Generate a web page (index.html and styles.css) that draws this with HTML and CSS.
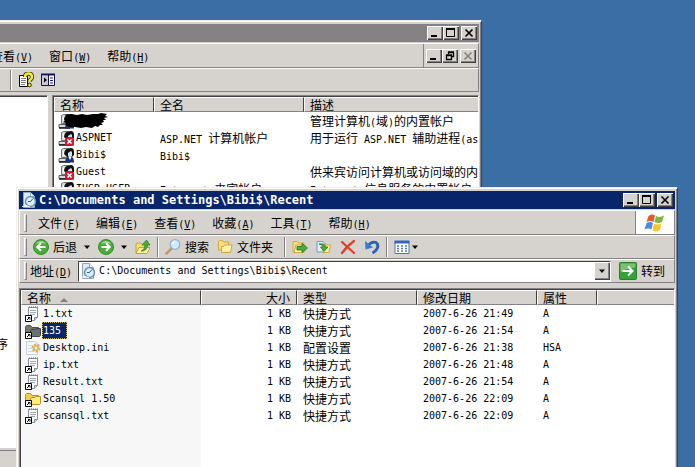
FILE: index.html
```
<!DOCTYPE html>
<html lang="zh-CN">
<head>
  <meta charset="UTF-8">
  <meta name="viewport" content="width=device-width, initial-scale=1.0">
  <title>Recent</title>
  <link rel="stylesheet" href="styles.css">
</head>
<body>
  <!-- shared icons -->
  <svg class="defs" width="0" height="0">
    <symbol id="i-min" viewBox="0 0 12 10"><path d="M2 8h6" stroke="currentColor" stroke-width="2"/></symbol>
    <symbol id="i-max" viewBox="0 0 12 10"><path d="M1.500 1v7.500h8V1M1 1h9" fill="none" stroke="currentColor"/><path d="M1 1h9" stroke="currentColor" stroke-width="2"/></symbol>
    <symbol id="i-restore" viewBox="0 0 12 10"><path d="M4.500 3V1.500h5v4H8M4 1h6M2.500 4.500h5v4h-5zM2 4h6" fill="none" stroke="currentColor" stroke-width="1.300"/></symbol>
    <symbol id="i-close" viewBox="0 0 12 10"><path d="M2.500 1.500l7 7M9.500 1.500l-7 7" stroke="currentColor" stroke-width="1.700"/></symbol>
    <symbol id="i-down" viewBox="0 0 8 8"><path d="M1 2.500h6L4 6z" fill="#000"/></symbol>
    <symbol id="i-recent" viewBox="0 0 16 16">
      <path d="M2.500.5h7l4 4v11h-11z" fill="#dcecf8" stroke="#89a9c4"/>
      <path d="M9.500.5v4h4" fill="#fff" stroke="#89a9c4"/>
      <circle cx="9.500" cy="9.500" r="5" fill="#d8f0fa" stroke="#7090b0" stroke-width="1.500"/>
      <path d="M9.500 9.500l2.500-3M9.500 9.500H7" stroke="#2c5c88"/>
      <path d="M1 14.500q4-2 8 .5" stroke="#fff" fill="none"/>
    </symbol>
    <symbol id="i-user" viewBox="0 0 16 16">
      <path d="M3.500 2.500l2-1h5v9h-7z" fill="#d8dcd8" stroke="#707470"/>
      <path d="M5 4h4v5H5z" fill="#f4faf8"/>
      <path d="M1 11.500h10v3H1z" fill="#dcdcdc" stroke="#606060"/>
      <path d="M1 15h11" stroke="#181818" stroke-width="1.500"/>
      <path d="M6 7q0-6 7-6 3 0 3 4v3l-2 2H9z" fill="#101010"/>
      <path d="M10 6l3-2 1 1v4l-2 2-2-2z" fill="#c8e4f8"/>
      <path d="M7 15.500q0-5 4-5.500h3q2 1 2 5.500z" fill="#1c3080"/>
      <path d="M10.500 10l1.500 3 1.500-3z" fill="#fff"/>
    </symbol>
    <symbol id="i-user-off" viewBox="0 0 16 16">
      <use href="#i-user"/>
      <rect x="7" y="7" width="9" height="9" rx="3" fill="#d81830"/>
      <path d="M9.500 9.500l4 4M13.500 9.500l-4 4" stroke="#fff" stroke-width="1.500"/>
    </symbol>
    <symbol id="i-link" viewBox="0 0 16 16">
      <path d="M.5 9.500h6v6h-6z" fill="#fff" stroke="#000"/>
      <path d="M2 14l3-3M3 11.500h2v2" fill="none" stroke="#000"/>
    </symbol>
    <symbol id="i-txt" viewBox="0 0 16 16">
      <path d="M3.500 1.500h9v10l-3 3h-6z" fill="#fafafa" stroke="#8a9098"/>
      <path d="M12.500 11.500h-3v3" fill="#d0d8e0" stroke="#8a9098"/>
      <path d="M5 4.500h6M5 6.500h6M5 8.500h5" stroke="#a0a8b0"/>
      <path d="M4 1h9" stroke="#606870" stroke-dasharray="1 1"/>
      <use href="#i-link"/>
    </symbol>
    <symbol id="i-folder" viewBox="0 0 16 16">
      <path d="M.5 13V3.500l1-1h4l1.500 2h6.500V13z" fill="#f0d050" stroke="#b89020"/>
      <path d="M5.500 13.500v-6l1.500-1h3l1-1h4.500v7l-1 1z" fill="#ffec80" stroke="#b89020"/>
    </symbol>
    <symbol id="i-folder-link" viewBox="0 0 16 16"><use href="#i-folder"/><use href="#i-link"/></symbol>
    <symbol id="i-folder-sel" viewBox="0 0 16 16">
      <path d="M.5 13V3.500l1-1h4l1.500 2h6.500V13z" fill="#74786c" stroke="#50544c"/>
      <path d="M5.500 13.500v-6l1.500-1h3l1-1h4.500v7l-1 1z" fill="#687070" stroke="#3c4454"/>
      <use href="#i-link"/>
    </symbol>
    <symbol id="i-ini" viewBox="0 0 16 16">
      <path d="M1.500 1.500h9l2 2v11h-11z" fill="#f6f8fa" stroke="#c4d0dc"/>
      <path d="M3 5.500h5M3 8.500h4M3 11.500h5" stroke="#d0dce8"/>
      <circle cx="11" cy="8" r="3" fill="#e8c880" stroke="#d8b068" stroke-width="3" stroke-dasharray="2 1"/>
      <circle cx="11" cy="8" r="1" fill="#fff"/>
    </symbol>
  </svg>

  <main class="desktop">
    <section class="window back-window" aria-label="计算机管理">
      <div class="title-bar inactive">
        <div class="win-buttons">
          <button class="win-btn" aria-label="最小化"><svg><use href="#i-min"/></svg></button>
          <button class="win-btn" aria-label="最大化"><svg><use href="#i-max"/></svg></button>
          <button class="win-btn close" aria-label="关闭"><svg><use href="#i-close"/></svg></button>
        </div>
      </div>
      <div class="band menu-band">
        <nav class="menu">
          <button>查看<span class="en">(<u>V</u>)</span></button>
          <button>窗口<span class="en">(<u>W</u>)</span></button>
          <button>帮助<span class="en">(<u>H</u>)</span></button>
        </nav>
        <div class="win-buttons mdi">
          <button class="win-btn" aria-label="最小化"><svg><use href="#i-min"/></svg></button>
          <button class="win-btn" aria-label="还原"><svg><use href="#i-restore"/></svg></button>
          <button class="win-btn close" aria-label="关闭" disabled><svg><use href="#i-close"/></svg></button>
        </div>
      </div>
      <div class="band back-tools">
        <span class="tool-sep"></span>
        <button class="tool" aria-label="帮助">
          <svg class="icon" viewBox="0 0 16 16">
            <path d="M1.500 3.500h8v11h-8z" fill="#fff" stroke="#000"/>
            <path d="M3 6.500h5M3 8.500h5M3 10.500h5M3 12.500h4" stroke="#808080"/>
            <path d="M7 5q0-3.500 3.500-3.500T14 5q0 2-2.500 3.500V10" fill="none" stroke="#303000" stroke-width="4"/>
            <path d="M7 5q0-3.500 3.500-3.500T14 5q0 2-2.500 3.500V10" fill="none" stroke="#f4ec30" stroke-width="2.500"/>
            <circle cx="11.500" cy="13" r="1.800" fill="#f4ec30" stroke="#303000"/>
          </svg>
        </button>
        <button class="tool" aria-label="显示/隐藏操作窗格">
          <svg class="icon" viewBox="0 0 16 16">
            <path d="M1.500 2.500h13v11h-13z" fill="#fff" stroke="#101060"/>
            <path d="M1 2.500h14" stroke="#101060" stroke-width="2"/>
            <path d="M2 4h6v9H2z" fill="#c8c8d8"/>
            <path d="M8.500 3v10" stroke="#101060"/>
            <path d="M4 5.500v5L7 8z" fill="#000"/>
            <path d="M10 6h3M10 8.500h3M10 11h3" stroke="#202080"/>
          </svg>
        </button>
      </div>
      <div class="panes">
        <div class="pane tree"><span>序</span></div>
        <div class="pane list">
          <table class="users">
            <colgroup><col class="c-user"><col class="c-full"><col></colgroup>
            <thead><tr><th>名称</th><th>全名</th><th>描述</th></tr></thead>
            <tbody>
              <tr>
                <td class="name">
                  <svg class="scribble" viewBox="0 0 52 16">
                    <use href="#i-user" width="16" height="16"/>
                    <path d="M7 2l6-1 6 1 5-1 5 1 6-1 5 0 3-1 6 1-2 2 3 1-4 1 2 2-3 0 1 2-3 1 2 2-3 0-2 2-3-1-3 2-6-1-5 1-6-1-5 0-5-2 1-2-3-1 3-2-2-2 3-1z"/>
                  </svg>
                </td>
                <td></td>
                <td>管理计算机<span class="en">(</span>域<span class="en">)</span>的内置帐户</td>
              </tr>
              <tr>
                <td class="name"><svg class="icon"><use href="#i-user-off"/></svg><span class="en">ASPNET</span></td>
                <td><span class="en">ASP.NET </span>计算机帐户</td>
                <td>用于运行<span class="en"> ASP.NET </span>辅助进程<span class="en">(aspnet_wp.exe)</span></td>
              </tr>
              <tr>
                <td class="name"><svg class="icon"><use href="#i-user"/></svg><span class="en">Bibi$</span></td>
                <td><span class="en">Bibi$</span></td>
                <td></td>
              </tr>
              <tr>
                <td class="name"><svg class="icon"><use href="#i-user-off"/></svg><span class="en">Guest</span></td>
                <td></td>
                <td>供来宾访问计算机或访问域的内置帐户</td>
              </tr>
              <tr>
                <td class="name"><svg class="icon"><use href="#i-user"/></svg><span class="en">IUSR_USER</span></td>
                <td><span class="en">Internet </span>来宾帐户</td>
                <td><span class="en">Internet </span>信息服务的内置帐户</td>
              </tr>
            </tbody>
          </table>
        </div>
      </div>
      <div class="status"></div>
    </section>

    <section class="window front-window" aria-label="Recent">
      <div class="title-bar">
        <svg class="icon"><use href="#i-recent"/></svg>
        <h1>C:\Documents and Settings\Bibi$\Recent</h1>
        <div class="win-buttons">
          <button class="win-btn" aria-label="最小化"><svg><use href="#i-min"/></svg></button>
          <button class="win-btn" aria-label="最大化"><svg><use href="#i-max"/></svg></button>
          <button class="win-btn close" aria-label="关闭"><svg><use href="#i-close"/></svg></button>
        </div>
      </div>

      <div class="band menu-band">
        <span class="grip"></span>
        <nav class="menu">
          <button>文件<span class="en">(<u>F</u>)</span></button>
          <button>编辑<span class="en">(<u>E</u>)</span></button>
          <button>查看<span class="en">(<u>V</u>)</span></button>
          <button>收藏<span class="en">(<u>A</u>)</span></button>
          <button>工具<span class="en">(<u>T</u>)</span></button>
          <button>帮助<span class="en">(<u>H</u>)</span></button>
        </nav>
        <div class="brand">
          <svg viewBox="0 0 22 20" width="22" height="20">
            <path d="M4.500 3Q8 .5 11 2.500L9.500 9Q6 7 2.500 9z" fill="#e8582c"/>
            <path d="M12 3q3.500 2 8-.5L18 9q-4 2-7.500 0z" fill="#7cb83c"/>
            <path d="M2.500 10q3.500-2 6.500 0l-1.500 6.500q-3-2-7 0z" fill="#4c8ce0"/>
            <path d="M10 10.500q3.500 2 7.500 0L16 17q-4 2.500-7.500.5z" fill="#f8c430"/>
          </svg>
        </div>
      </div>

      <div class="band tools">
        <span class="grip"></span>
        <button class="tool">
          <svg class="icon" viewBox="0 0 16 16"><circle cx="8" cy="8" r="7.500" fill="#48ac38" stroke="#3c8c30"/><path d="M2.500 5Q8-1 13.500 5 8 3 2.500 5z" fill="#a8e098"/><path d="M12.500 8H4.500M8 4.200L4.200 8 8 11.800" fill="none" stroke="#fff" stroke-width="2"/></svg>
          后退
        </button>
        <button class="drop" aria-label="后退历史"><svg><use href="#i-down"/></svg></button>
        <button class="tool" aria-label="前进">
          <svg class="icon" viewBox="0 0 16 16"><circle cx="8" cy="8" r="7.500" fill="#48ac38" stroke="#3c8c30"/><path d="M2.500 5Q8-1 13.500 5 8 3 2.500 5z" fill="#a8e098"/><path d="M3.500 8h8M8 4.200L11.800 8 8 11.800" fill="none" stroke="#fff" stroke-width="2"/></svg>
        </button>
        <button class="drop" aria-label="前进历史"><svg><use href="#i-down"/></svg></button>
        <button class="tool" aria-label="向上">
          <svg class="icon" viewBox="0 0 16 16"><path d="M1 14.500V5l1-1h4l1 1.500h5l-1 9z" fill="#f4dc68" stroke="#c8a438"/><path d="M1 14.500l3-6h11l-3 6z" fill="#fff0a0" stroke="#c8a438"/><path d="M6 12q4-1 4-6H7l4.500-5L15 6h-2.500q0 6-6.500 6z" fill="#48b038" stroke="#287820" stroke-width=".7"/></svg>
        </button>
        <span class="tool-sep"></span>
        <button class="tool">
          <svg class="icon" viewBox="0 0 16 16"><path d="M1.500 14.500l5-5" stroke="#c09870" stroke-width="2.500" stroke-linecap="round"/><circle cx="10" cy="5.500" r="4.800" fill="#d0ecfc" stroke="#90b0d0" stroke-width="1.300"/><path d="M7.500 5Q8 3 10 2.500" fill="none" stroke="#fff" stroke-width="1.500"/></svg>
          搜索
        </button>
        <button class="tool folders">
          <svg class="icon" viewBox="0 0 16 16"><path d="M1.500 11V2.500l1-1h3l1 1.500h5V11z" fill="#f8e078" stroke="#d0a840"/><path d="M4.500 13.500v-6h2l1-1.500h7.500l-1.500 7.500z" fill="#fff2a8" stroke="#d0a840"/></svg>
          文件夹
        </button>
        <span class="tool-sep"></span>
        <button class="tool" aria-label="移至">
          <svg class="icon" viewBox="0 0 16 16"><path d="M1 13V2.500h4L6.500 4H12v9z" fill="#f8e078" stroke="#d0a840"/><path d="M2 13.500L4 6h9l-1 7.500z" fill="#fff4b8" stroke="#d0a840"/><path d="M5 7.500h5V4.500L15.500 9 10 13.500V11H5z" fill="#48b038" stroke="#207020" stroke-width=".8"/></svg>
        </button>
        <button class="tool" aria-label="复制到">
          <svg class="icon" viewBox="0 0 16 16"><path d="M1 2.500h6l2 2V13H1z" fill="#e0f0fc" stroke="#7898c0"/><path d="M7 13.500V6h7.500L13 13.500z" fill="#fff0a0" stroke="#d0a840"/><path d="M3 5q6-1 6.500 3H12l-4 4.500L4.500 8H7Q7 5.500 3 5z" fill="#48b038" stroke="#207020" stroke-width=".7"/></svg>
        </button>
        <button class="tool" aria-label="删除">
          <svg class="icon" viewBox="0 0 16 16"><path d="M2 3l12 11M14 2Q7 7 2 14" fill="none" stroke="#e04028" stroke-width="2.300" stroke-linecap="round"/></svg>
        </button>
        <button class="tool" aria-label="撤消">
          <svg class="icon" viewBox="0 0 16 16"><path d="M3.500 7Q8 2 12 3.500 15.500 6 12.500 10.500 11.500 12.500 8.500 14" fill="none" stroke="#2c60b8" stroke-width="2.800"/><path d="M1 2l.5 8.500L9 8.500z" fill="#3c78d0"/></svg>
        </button>
        <span class="tool-sep"></span>
        <button class="tool views" aria-label="查看">
          <svg class="icon" viewBox="0 0 16 16"><path d="M1 2.500h14v12H1z" fill="#fff" stroke="#4878b8"/><path d="M.5 3h15" stroke="#3068c0" stroke-width="3"/><path d="M3 7h10M3 9.500h10M3 12h10" stroke="#5080a0" stroke-width="1.500" stroke-dasharray="2 2"/></svg>
          <svg class="arrow"><use href="#i-down"/></svg>
        </button>
      </div>

      <div class="band address">
        <span class="grip"></span>
        <label for="path">地址<span class="en">(<u>D</u>)</span></label>
        <div class="combo">
          <svg class="icon"><use href="#i-recent"/></svg>
          <input type="text" id="path" class="en" value="C:\Documents and Settings\Bibi$\Recent">
          <button class="combo-btn" aria-label="展开"><svg><use href="#i-down"/></svg></button>
        </div>
        <button class="go">
          <svg viewBox="0 0 18 18" width="18" height="18"><rect x=".5" y=".5" width="17" height="17" rx="1" fill="#38a038" stroke="#2c7c2c"/><path d="M1.500 1.500h15v4q-8 0-15 5z" fill="#78c470"/><path d="M3.500 9h10M9 4.500L13.500 9 9 13.500" fill="none" stroke="#fff" stroke-width="2"/></svg>
          转到
        </button>
      </div>

      <div class="pane files-pane">
        <table class="files">
          <colgroup><col class="c-name"><col class="c-size"><col class="c-type"><col class="c-date"><col class="c-attr"><col></colgroup>
          <thead>
            <tr>
              <th>名称<svg class="sort" viewBox="0 0 8 4"><path d="M0 4l4-4 4 4z" fill="#848284"/></svg></th>
              <th class="num">大小</th><th>类型</th><th>修改日期</th><th>属性</th><th></th>
            </tr>
          </thead>
          <tbody>
            <tr><td class="name"><svg class="icon"><use href="#i-txt"/></svg><span class="en">1.txt</span></td><td class="num en">1 KB</td><td>快捷方式</td><td class="en">2007-6-26 21:49</td><td class="en">A</td><td></td></tr>
            <tr><td class="name"><svg class="icon"><use href="#i-folder-sel"/></svg><span class="en selected">135</span></td><td class="num en">1 KB</td><td>快捷方式</td><td class="en">2007-6-26 21:54</td><td class="en">A</td><td></td></tr>
            <tr><td class="name"><svg class="icon"><use href="#i-ini"/></svg><span class="en">Desktop.ini</span></td><td class="num en">1 KB</td><td>配置设置</td><td class="en">2007-6-26 21:38</td><td class="en">HSA</td><td></td></tr>
            <tr><td class="name"><svg class="icon"><use href="#i-txt"/></svg><span class="en">ip.txt</span></td><td class="num en">1 KB</td><td>快捷方式</td><td class="en">2007-6-26 21:48</td><td class="en">A</td><td></td></tr>
            <tr><td class="name"><svg class="icon"><use href="#i-txt"/></svg><span class="en">Result.txt</span></td><td class="num en">1 KB</td><td>快捷方式</td><td class="en">2007-6-26 21:54</td><td class="en">A</td><td></td></tr>
            <tr><td class="name"><svg class="icon"><use href="#i-folder-link"/></svg><span class="en">Scansql 1.50</span></td><td class="num en">1 KB</td><td>快捷方式</td><td class="en">2007-6-26 22:09</td><td class="en">A</td><td></td></tr>
            <tr><td class="name"><svg class="icon"><use href="#i-txt"/></svg><span class="en">scansql.txt</span></td><td class="num en">1 KB</td><td>快捷方式</td><td class="en">2007-6-26 22:09</td><td class="en">A</td><td></td></tr>
          </tbody>
        </table>
      </div>
    </section>
  </main>
</body>
</html>
```
FILE: styles.css
```
:root {
  --desktop: #3a6ea5;
  --face: #d6d3ce;
  --shadow: #848284;
  --dark: #424142;
  --navy: #08246b;
  --column: #f7f7f7;
}

* {
  box-sizing: border-box;
}

body {
  margin: 0;
  font-family: "Noto Sans CJK SC", sans-serif;
  font-size: 12px;
  line-height: 16px;
  color: #000;
}

button,
input {
  font: inherit;
  color: inherit;
  margin: 0;
  padding: 0;
  border: none;
  background: none;
}

svg {
  display: block;
  flex: none;
}

.defs {
  position: absolute;
}

/* latin text is half the width of a chinese character */
.en {
  font-family: "DejaVu Sans Mono", monospace;
  font-size: 10px;
  line-height: 12px;
  white-space: pre;
}

.icon {
  width: 16px;
  height: 16px;
}

.desktop {
  position: relative;
  height: 100vh;
  overflow: hidden;
  background: var(--desktop);
}

/* windows */
.window {
  position: absolute;
  display: flex;
  flex-direction: column;
  padding: 3px 2px;
  border: 1px solid;
  border-color: #efebe7 var(--dark) var(--dark) #efebe7;
  background: var(--face);
  box-shadow: inset 1px 1px #fff, inset -1px -1px var(--shadow);
}

.back-window {
  top: 20px;
  left: -60px;
  right: 213px;
  bottom: -6px;
}

.front-window {
  top: 187px;
  left: 16px;
  right: 17px;
  bottom: -12px;
}

.title-bar {
  flex: none;
  display: flex;
  align-items: center;
  height: 18px;
  margin-bottom: 1px;
  padding: 0 2px;
  background: var(--navy);
  color: #fff;
}

.title-bar.inactive {
  background: var(--shadow);
}

.title-bar h1 {
  flex: 1;
  margin: 0 0 0 2px;
  font: bold 12px/16px "DejaVu Sans Mono", monospace;
  white-space: nowrap;
}

.win-buttons {
  display: flex;
  margin-left: auto;
}

.win-btn {
  display: flex;
  align-items: center;
  justify-content: center;
  width: 16px;
  height: 14px;
  background: var(--face);
  color: #000;
  box-shadow: inset 1px 1px #fff, inset -1px -1px var(--dark), inset -2px -2px var(--shadow);
}

.win-btn svg {
  width: 12px;
  height: 10px;
}

.win-btn.close {
  margin-left: 2px;
}

.win-btn:disabled {
  color: var(--shadow);
}

/* bars */
.band {
  flex: none;
  display: flex;
  align-items: center;
  height: 24px;
  border: 1px solid;
  border-color: #fff var(--shadow) var(--shadow) #fff;
  white-space: nowrap;
}

.menu-band {
  height: 25px;
}

.grip {
  width: 3px;
  height: 18px;
  margin-left: 4px;
  border: 1px solid;
  border-color: #fff var(--shadow) var(--shadow) #fff;
}

.menu {
  display: flex;
  flex: 1;
  margin-left: 3px;
}

.menu button {
  padding: 0 8px;
}

.back-window .menu {
  margin-left: 39px;
}

.mdi {
  align-items: center;
  align-self: stretch;
  padding: 0 2px;
  border-left: 1px solid var(--shadow);
}

.brand {
  display: flex;
  align-items: center;
  align-self: stretch;
  justify-content: center;
  width: 39px;
  background: #fff;
  border-left: 1px solid var(--shadow);
}

.tool {
  display: flex;
  align-items: center;
  gap: 4px;
  margin-left: 8px;
}

.tool-sep {
  width: 2px;
  height: 20px;
  margin-left: 6px;
  border-left: 1px solid var(--shadow);
  border-right: 1px solid #fff;
}

.drop {
  margin-left: 6px;
}

.drop + .tool {
  margin-left: 7px;
}

.drop svg,
.arrow,
.combo-btn svg {
  width: 8px;
  height: 8px;
}

.tools .grip + .tool,
.tool-sep + .tool {
  margin-left: 6px;
}

.folders {
  margin-right: 5px;
}

.views {
  gap: 1px;
}

.back-tools {
  padding-left: 60px;
}

.back-tools .tool {
  margin-left: 6px;
}

.address label {
  margin-left: 3px;
}

.combo {
  flex: 1;
  display: flex;
  align-items: center;
  height: 21px;
  margin: 0 8px 0 6px;
  padding: 0 0 0 1px;
  background: #fff;
  border: 1px solid;
  border-color: var(--dark) #fff #fff var(--dark);
}

.combo input {
  flex: 1;
  min-width: 0;
  margin-left: 3px;
  outline: none;
}

.combo-btn {
  display: flex;
  align-items: center;
  justify-content: center;
  width: 16px;
  height: 18px;
  background: var(--face);
  box-shadow: inset 1px 1px #fff, inset -1px -1px var(--dark), inset -2px -2px var(--shadow);
}

.go {
  display: flex;
  align-items: center;
  gap: 4px;
  margin-right: 9px;
}

/* panes */
.panes {
  flex: 1;
  display: flex;
  gap: 4px;
  min-height: 0;
  margin-top: 3px;
}

.pane {
  overflow: hidden;
  background: #fff;
  border: 1px solid;
  border-color: var(--shadow) #fff #fff var(--shadow);
  box-shadow: inset 1px 1px var(--dark);
  padding: 1px 0 0 1px;
}

.tree {
  display: flex;
  flex: none;
  align-items: center;
  width: 105px;
  padding: 144px 0 0 52px;
}

.list {
  flex: 1;
}

.status {
  flex: none;
  height: 19px;
  margin-top: 2px;
  border-top: 1px solid var(--shadow);
}

.files-pane {
  flex: 1;
  margin-top: 5px;
  background: linear-gradient(to right, var(--column) 181px, #fff 181px);
}

/* lists */
table {
  width: 100%;
  table-layout: fixed;
  border-collapse: separate;
  border-spacing: 0;
}

th {
  height: 15px;
  padding: 0 6px 0 5px;
  font-weight: normal;
  line-height: 13px;
  text-align: left;
  background: var(--face);
  border: 1px solid;
  border-color: #fff var(--dark) var(--shadow) #fff;
}

th:last-child {
  border-right: none;
}

td {
  height: 17px;
  padding: 0 6px;
  line-height: 16px;
  white-space: nowrap;
}

.num {
  text-align: right;
}

.name {
  display: flex;
  align-items: center;
  gap: 2px;
  padding: 0 4px;
}

.sort {
  display: inline-block;
  width: 8px;
  height: 4px;
  margin-left: 9px;
  vertical-align: middle;
}

.scribble {
  width: 52px;
  height: 16px;
}

.selected {
  margin-left: -1px;
  padding: 0 6px 0 1px;
  line-height: 17px;
  background: var(--navy);
  color: #fff;
  outline: 1px dotted #c8b070;
  outline-offset: -1px;
}

.c-user { width: 100px; }
.c-full { width: 150px; }
.c-name { width: 180px; }
.c-size { width: 96px; }
.c-type { width: 120px; }
.c-date { width: 120px; }
.c-attr { width: 60px; }
```
